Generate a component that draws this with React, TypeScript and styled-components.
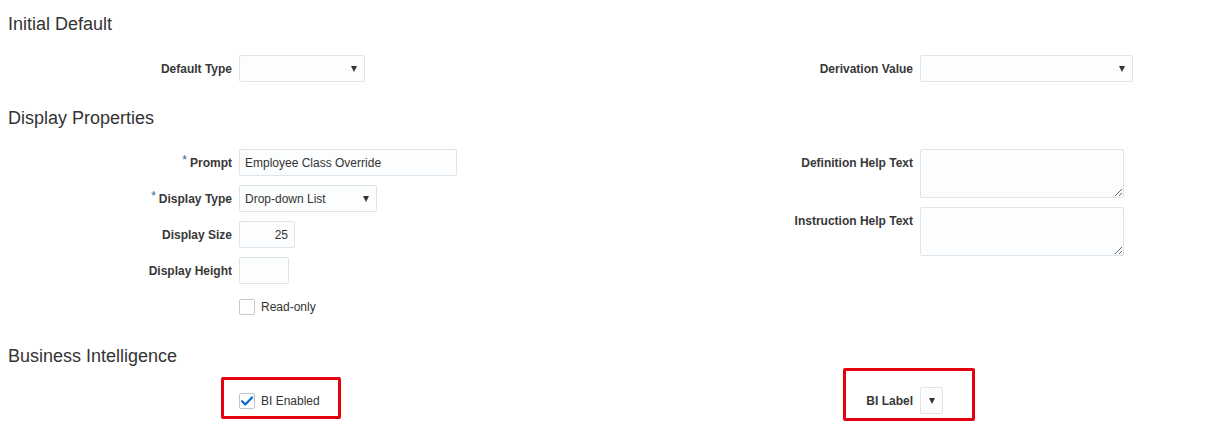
import React from "react";
import styled, { createGlobalStyle } from "styled-components";

const GlobalStyle = createGlobalStyle`
  body {
    margin: 0;
    background: #ffffff;
    font-family: "Liberation Sans", Arial, sans-serif;
    color: #333333;
  }
`;

const Page = styled.div`
  padding: 12px 8px 0 8px;
  width: 1225px;
  min-height: 425px;
  box-sizing: border-box;
`;

const Section = styled.section`
  & + & {
    margin-top: 24px;
  }
`;

const Heading = styled.h2`
  margin: 0 0 19px 0;
  font-size: 18px;
  line-height: 24px;
  font-weight: normal;
  color: #333333;
`;

const Columns = styled.div`
  display: grid;
  grid-template-columns: 681px 1fr;
  align-items: start;
`;

const FieldList = styled.div`
  display: flex;
  flex-direction: column;
  gap: 9px;
`;

const Row = styled.div`
  position: relative;
  display: grid;
  grid-template-columns: 224px auto;
  column-gap: 7px;
  align-items: start;
  justify-content: start;
`;

const Label = styled.label`
  display: block;
  box-sizing: border-box;
  height: 27px;
  padding-top: 1px;
  text-align: right;
  font-size: 12px;
  font-weight: bold;
  line-height: 27px;
  color: #383838;
  white-space: nowrap;
`;

const Required = styled.span`
  position: relative;
  top: -3px;
  color: #3c5f94;
  font-weight: normal;
  font-size: 12px;
  line-height: 0;
  margin-right: 3px;
`;

const TextBox = styled.input<{ $w: number; $align?: string }>`
  box-sizing: border-box;
  width: ${(p) => p.$w}px;
  height: 27px;
  border: 1px solid #dfe4e7;
  border-radius: 2px;
  background: #fcfdfe;
  padding: 0 6px 0 5px;
  font-family: "Liberation Sans", Arial, sans-serif;
  font-size: 12px;
  color: #333333;
  text-align: ${(p) => p.$align || "left"};
  outline: none;
`;

const SelectBox = styled.div<{ $w: number }>`
  box-sizing: border-box;
  width: ${(p) => p.$w}px;
  height: 27px;
  border: 1px solid #dfe4e7;
  border-radius: 2px;
  background: #fcfdfe;
  display: flex;
  align-items: center;
  padding: 0 7px 0 5px;
  font-size: 12px;
  color: #333333;
`;

const SelectValue = styled.span`
  flex: 1;
  white-space: nowrap;
`;

const Arrow = styled.span`
  width: 0;
  height: 0;
  border-left: 3.5px solid transparent;
  border-right: 3.5px solid transparent;
  border-top: 6px solid #333333;
`;

const TextArea = styled.textarea`
  box-sizing: border-box;
  width: 204px;
  height: 49px;
  border: 1px solid #dfe4e7;
  border-radius: 2px;
  background: #fcfdfe;
  font-family: "Liberation Sans", Arial, sans-serif;
  font-size: 12px;
  resize: both;
  outline: none;
  display: block;
`;

const CheckRow = styled.div`
  display: flex;
  align-items: center;
  gap: 6px;
  height: 27px;
  font-size: 12px;
  color: #333333;
`;

const Box = styled.span<{ $checked?: boolean }>`
  box-sizing: border-box;
  width: 16px;
  height: 16px;
  border: 1px solid ${(p) => (p.$checked ? "#b9c6d3" : "#c2c9cf")};
  border-radius: 2px;
  background: #ffffff;
  display: flex;
  align-items: center;
  justify-content: center;
`;

const Highlight = styled.div<{ $l: number; $t: number; $w: number; $h: number }>`
  position: absolute;
  left: ${(p) => p.$l}px;
  top: ${(p) => p.$t}px;
  width: ${(p) => p.$w}px;
  height: ${(p) => p.$h}px;
  box-sizing: border-box;
  border: 3px solid #e3000f;
  border-radius: 2px;
  pointer-events: none;
`;

function Select({ width, value }: { width: number; value?: string }) {
  return (
    <SelectBox $w={width}>
      <SelectValue>{value}</SelectValue>
      <Arrow />
    </SelectBox>
  );
}

function Checkbox({ checked, label }: { checked?: boolean; label: string }) {
  return (
    <CheckRow>
      <Box $checked={checked}>
        {checked && (
          <svg width="14" height="12" viewBox="0 0 14 12">
            <path
              d="M2 6.2 L5.3 9.4 L12 2.4"
              fill="none"
              stroke="#0b6ad1"
              strokeWidth="2.2"
              strokeLinecap="round"
              strokeLinejoin="round"
            />
          </svg>
        )}
      </Box>
      {label}
    </CheckRow>
  );
}

export default function App() {
  return (
    <>
      <GlobalStyle />
      <Page>
        <Section>
          <Heading>Initial Default</Heading>
          <Columns>
            <FieldList>
              <Row>
                <Label>Default Type</Label>
                <Select width={126} />
              </Row>
            </FieldList>
            <FieldList>
              <Row>
                <Label>Derivation Value</Label>
                <Select width={213} />
              </Row>
            </FieldList>
          </Columns>
        </Section>

        <Section>
          <Heading>Display Properties</Heading>
          <Columns>
            <FieldList>
              <Row>
                <Label>
                  <Required>*</Required>Prompt
                </Label>
                <TextBox $w={218} defaultValue="Employee Class Override" />
              </Row>
              <Row>
                <Label>
                  <Required>*</Required>Display Type
                </Label>
                <Select width={138} value="Drop-down List" />
              </Row>
              <Row>
                <Label>Display Size</Label>
                <TextBox $w={56} $align="right" defaultValue="25" />
              </Row>
              <Row>
                <Label>Display Height</Label>
                <TextBox $w={50} defaultValue="" />
              </Row>
              <Row>
                <span />
                <Checkbox label="Read-only" />
              </Row>
            </FieldList>
            <FieldList>
              <Row>
                <Label>Definition Help Text</Label>
                <TextArea />
              </Row>
              <Row>
                <Label>Instruction Help Text</Label>
                <TextArea />
              </Row>
            </FieldList>
          </Columns>
        </Section>

        <Section>
          <Heading>Business Intelligence</Heading>
          <Columns>
            <FieldList>
              <Row>
                <span />
                <Checkbox checked label="BI Enabled" />
                <Highlight $l={213} $t={-10} $w={120} $h={42} />
              </Row>
            </FieldList>
            <FieldList>
              <Row>
                <Label>BI Label</Label>
                <Select width={23} />
                <Highlight $l={154} $t={-19} $w={132} $h={53} />
              </Row>
            </FieldList>
          </Columns>
        </Section>
      </Page>
    </>
  );
}
